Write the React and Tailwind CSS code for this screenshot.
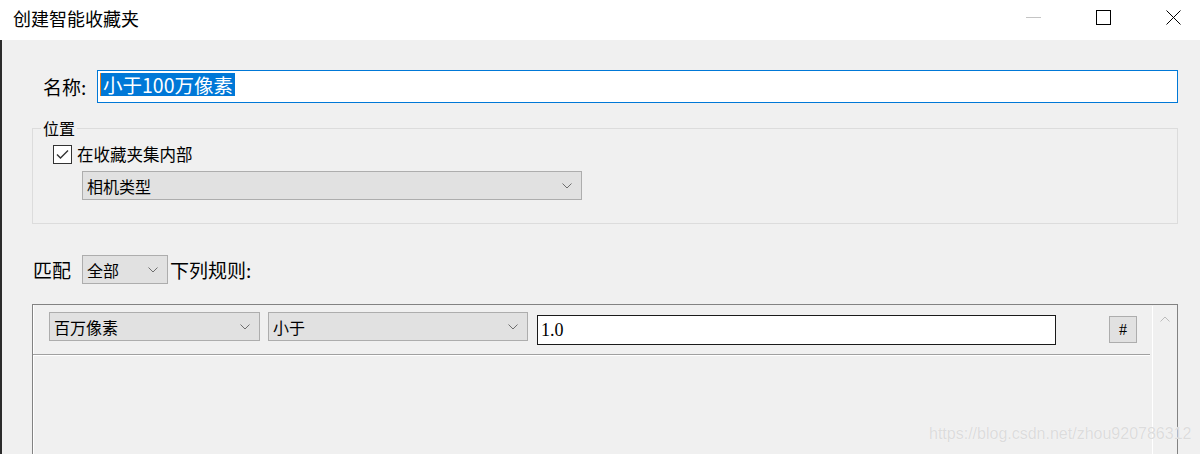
import React from 'react';

const Chevron = ({ up = false, color = '#6e6e6e' }) => (
  <svg width="10" height="6" viewBox="0 0 10 6">
    <polyline
      points={up ? '0.5,5.5 5,1 9.5,5.5' : '0.5,0.5 5,5 9.5,0.5'}
      fill="none"
      stroke={color}
      strokeWidth="1"
    />
  </svg>
);

const Select = ({ label, className = '' }) => (
  <div
    className={`flex items-center justify-between border border-[#adadad] bg-[#e1e1e1] pl-[4px] pr-[9px] text-[16px] leading-[20px] text-black ${className}`}
  >
    <span>{label}</span>
    <Chevron />
  </div>
);

export default function App() {
  return (
    <div className="relative flex h-[454px] w-[1200px] flex-col overflow-hidden bg-[#f0f0f0] font-['Noto_Sans_CJK_SC',sans-serif] text-black">
      {/* Title bar */}
      <div className="flex h-[40px] shrink-0 items-center bg-white pl-[13px] pr-[19px]">
        <span className="pb-[4px] text-[18px] leading-[24px]">创建智能收藏夹</span>
        <div className="ml-auto flex items-center gap-[55px] pb-[6px]">
          <span className="h-[1px] w-[15px] bg-[#c4c4c4]" />
          <span className="h-[15px] w-[15px] border border-black" />
          <svg width="15" height="15" viewBox="0 0 15 15">
            <line x1="0.5" y1="0.5" x2="14.5" y2="14.5" stroke="#000" strokeWidth="1" />
            <line x1="14.5" y1="0.5" x2="0.5" y2="14.5" stroke="#000" strokeWidth="1" />
          </svg>
        </div>
      </div>

      {/* Body */}
      <div className="flex flex-1 flex-col overflow-hidden border-l-2 border-[#2b2b2b]">
        {/* Name */}
        <div className="mt-[30px] flex items-center">
          <span className="ml-[41px] w-[54px] text-[19px] leading-[24px]">名称:</span>
          <div className="flex h-[33px] w-[1081px] items-start border border-[#0078d7] bg-white pl-[2px] pt-[2px]">
            <span className="h-[23px] w-[1px] bg-[#e67e22]" />
            <span className="flex h-[23px] items-center bg-[#0078d7] px-[2px] text-[19.5px] leading-[23px] text-white">
              小于100万像素
            </span>
          </div>
        </div>

        {/* Location group */}
        <fieldset className="ml-[30px] mt-[15px] w-[1146px] border border-[#dcdcdc] pb-[23px] pt-[6px]">
          <legend className="ml-[8px] px-[2px] text-[16px] leading-[20px]">位置</legend>
          <div className="pl-[20px]">
            <div className="flex items-center gap-[5px]">
              <span className="flex h-[19px] w-[19px] items-center justify-center border border-[#333] bg-white">
                <svg width="13" height="11" viewBox="0 0 13 11">
                  <polyline points="1,5.5 4.5,9 12,1.5" fill="none" stroke="#333" strokeWidth="1.4" />
                </svg>
              </span>
              <span className="text-[16.5px] leading-[20px]">在收藏夹集内部</span>
            </div>
            <Select label="相机类型" className="ml-[29px] mt-[7px] h-[29px] w-[500px]" />
          </div>
        </fieldset>

        {/* Match */}
        <div className="mt-[31px] flex items-center">
          <span className="ml-[31px] w-[49px] text-[19px] leading-[24px]">匹配</span>
          <Select label="全部" className="h-[29px] w-[86px]" />
          <span className="ml-[2px] text-[19px] leading-[24px]">下列规则:</span>
        </div>

        {/* Rules panel */}
        <div className="ml-[30px] mt-[20px] flex h-[200px] w-[1146px] shrink-0 border border-[#828282] shadow-[inset_1px_0_0_#fff]">
          <div className="w-[1117px]">
            <div className="flex h-[50px] items-start border-b border-[#a0a0a0] pl-[16px] pt-[7px]">
              <Select label="百万像素" className="h-[29px] w-[211px]" />
              <Select label="小于" className="ml-[8px] h-[29px] w-[260px]" />
              <div className="ml-[9px] mt-[3px] flex h-[30px] w-[519px] items-center border border-[#1a1a1a] bg-white pl-[3px] font-['Liberation_Serif',serif] text-[18px] leading-[22px]">
                1.0
              </div>
              <div className="ml-[53px] mt-[4px] flex h-[27px] w-[28px] items-center justify-center border border-[#adadad] bg-[#e1e1e1] font-['Liberation_Serif',serif] text-[16px] leading-[20px]">
                #
              </div>
            </div>
            <div className="h-[1px] w-full bg-white" />
          </div>
          <div className="ml-[2px] mt-[1px] flex w-[25px] justify-center border-l border-white pt-[10px]">
            <Chevron up color="#bcbcbc" />
          </div>
        </div>
      </div>

      {/* Watermark */}
      <span className="absolute left-[929px] top-[425px] font-['Liberation_Sans',sans-serif] text-[16px] leading-[18px] text-[#dcdcdc] [text-shadow:0_0_1px_#ffffff]">
        https://blog.csdn.net/zhou920786312
      </span>
    </div>
  );
}
